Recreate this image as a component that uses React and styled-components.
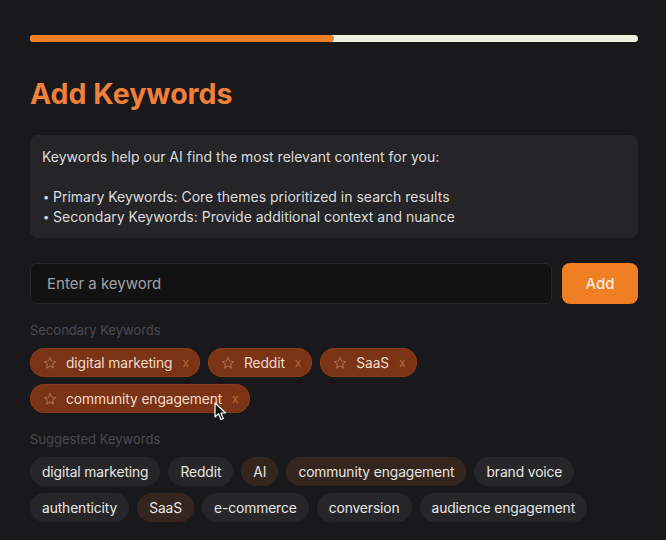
import React from "react";
import styled, { createGlobalStyle } from "styled-components";

const Global = createGlobalStyle`
  html, body { margin: 0; padding: 0; background: #19191b; }
  body { font-family: Inter, "Noto Sans", "Liberation Sans", sans-serif; color: #e8e8e8; }
  * { box-sizing: border-box; }
`;

const Page = styled.div`
  width: 666px;
  height: 540px;
  padding: 35px 28px 0 30px;
  position: relative;
  overflow: hidden;
`;

const Track = styled.div`
  height: 7px;
  border-radius: 4px;
  background: #efefdf;
  overflow: hidden;
`;

const Fill = styled.div`
  height: 100%;
  background: #f07e26;
  border-radius: 4px;
`;

const Title = styled.h1`
  margin: 35px 0 0;
  font-size: 28.5px;
  line-height: 34px;
  font-weight: 700;
  color: #f0803a;
`;

const Info = styled.div`
  margin-top: 24px;
  background: #252527;
  border-radius: 8px;
  padding: 12px 12px 11px;
  font-size: 14px;
  line-height: 20px;
  color: #dcdcdc;
`;

const Line = styled.div`
  height: 20px;
`;

const Dot = styled.span`
  display: inline-block;
  width: 11px;
  font-size: 11px;
  line-height: 20px;
  vertical-align: top;
  padding-left: 1px;
`;

const InputRow = styled.div`
  display: flex;
  gap: 10px;
  margin-top: 25px;
  align-items: stretch;
`;

const Input = styled.input`
  flex: 1;
  height: 41px;
  background: #121213;
  border: 1px solid #26262a;
  border-radius: 6px;
  padding: 0 16px;
  font-family: inherit;
  font-size: 15px;
  color: #e0e0e0;
  outline: none;
  &::placeholder { color: #a2a2a6; }
`;

const AddButton = styled.button`
  width: 76px;
  height: 41px;
  border: none;
  border-radius: 8px;
  background: #ef7f22;
  color: #fbe9dc;
  font-family: inherit;
  font-size: 15px;
  font-weight: 500;
`;

const Label = styled.div`
  margin-top: ${(p) => p.$mt}px;
  font-size: 13px;
  line-height: 16px;
  color: #4a4a50;
`;

const ChipWrap = styled.div`
  display: flex;
  flex-wrap: wrap;
  gap: 7px 8px;
  margin-top: 10px;
`;

const Chip = styled.div`
  display: inline-flex;
  align-items: center;
  height: 29px;
  padding: 0 12px;
  border-radius: 15px;
  font-size: 13.8px;
  letter-spacing: -0.1px;
  white-space: nowrap;
  background: ${(p) => (p.$tint ? "#35251f" : "#262628")};
  color: #e6e6e6;
`;

const SelChip = styled.div`
  display: inline-flex;
  align-items: center;
  height: 29px;
  padding: 0 11px 0 13px;
  border-radius: 15px;
  font-size: 13.8px;
  letter-spacing: -0.1px;
  white-space: nowrap;
  background: #7a3314;
  box-shadow: inset 0 0 0 1px #86391a;
  color: #f3dccd;
`;

const Star = styled.svg`
  width: 14px;
  height: 14px;
  margin-right: 9px;
  flex-shrink: 0;
`;

const Close = styled.span`
  margin-left: 10px;
  font-size: 12px;
  color: #c0683c;
`;

const Cursor = styled.svg`
  position: absolute;
  left: 214px;
  top: 402px;
  width: 13px;
  height: 19px;
`;

const StarIcon = () => (
  <Star viewBox="0 0 24 24" fill="none" stroke="#a46a48" strokeWidth="2" strokeLinejoin="round">
    <path d="M12 2.5l2.9 6.1 6.6.8-4.9 4.6 1.3 6.6L12 17.3l-5.9 3.3 1.3-6.6-4.9-4.6 6.6-.8z" />
  </Star>
);

const selected = ["digital marketing", "Reddit", "SaaS", "community engagement"];
const suggested = [
  ["digital marketing", false],
  ["Reddit", false],
  ["AI", true],
  ["community engagement", true],
  ["brand voice", false],
  ["authenticity", false],
  ["SaaS", true],
  ["e-commerce", false],
  ["conversion", false],
  ["audience engagement", false],
];

export default function App() {
  const progress = 50;
  return (
    <>
      <Global />
      <Page>
        <Track>
          <Fill style={{ width: `${progress}%` }} />
        </Track>
        <Title>Add Keywords</Title>
        <Info>
          <Line>Keywords help our AI find the most relevant content for you:</Line>
          <Line />
          <Line><Dot>•</Dot>Primary Keywords: Core themes prioritized in search results</Line>
          <Line><Dot>•</Dot>Secondary Keywords: Provide additional context and nuance</Line>
        </Info>
        <InputRow>
          <Input placeholder="Enter a keyword" />
          <AddButton>Add</AddButton>
        </InputRow>
        <Label $mt={18}>Secondary Keywords</Label>
        <ChipWrap>
          {selected.map((k) => (
            <SelChip key={k}>
              <StarIcon />
              {k}
              <Close>x</Close>
            </SelChip>
          ))}
        </ChipWrap>
        <Label $mt={18}>Suggested Keywords</Label>
        <ChipWrap>
          {suggested.map(([k, t]) => (
            <Chip key={k} $tint={t}>
              {k}
            </Chip>
          ))}
        </ChipWrap>
        <Cursor viewBox="0 0 13 19">
          <path d="M1 1 L1 15 L4.5 11.8 L7 17.5 L9.3 16.5 L6.9 11 L11.5 11 Z" fill="#111" stroke="#fff" strokeWidth="1.2" strokeLinejoin="round" />
        </Cursor>
      </Page>
    </>
  );
}
